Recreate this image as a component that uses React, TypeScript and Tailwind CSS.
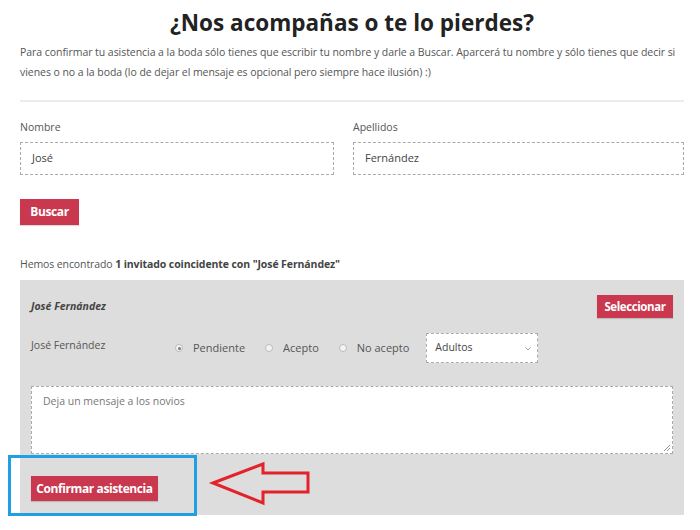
import React from 'react';

const font = { fontFamily: '"Open Sans", "Liberation Sans", sans-serif' };

function Radio({ checked, label }: { checked?: boolean; label: string }) {
  return (
    <label className="flex items-center gap-[10px] text-[11px] text-[#555]">
      <span className="w-[8px] h-[8px] rounded-full border border-[#bbb] bg-[#f4f4f4] flex items-center justify-center">
        {checked && <span className="w-[3px] h-[3px] rounded-full bg-[#777]" />}
      </span>
      <span>{label}</span>
    </label>
  );
}

export default function App() {
  return (
    <div className="relative w-[700px] h-[530px] bg-white overflow-hidden" style={font}>
      <div className="pl-5 pr-4 pt-2">
        {/* Title */}
        <h1 className="text-center text-[22.5px] leading-[30px] font-bold text-[#222]">
          ¿Nos acompañas o te lo pierdes?
        </h1>
        <p className="mt-1 text-[10.5px] leading-[20px] text-[#555] tracking-[-0.05px]">
          Para confirmar tu asistencia a la boda sólo tienes que escribir tu nombre y darle a Buscar. Aparcerá tu nombre y sólo tienes que decir si vienes o no a la boda (lo de dejar el mensaje es opcional pero siempre hace ilusión) :)
        </p>

        <div className="mt-[18px] h-[2px] bg-[#ececec]" />

        {/* Search form */}
        <div className="mt-[17px] grid grid-cols-[314px_1fr] gap-x-[19px]">
          <div>
            <div className="text-[10.5px] leading-[16px] text-[#555]">Nombre</div>
            <div className="mt-[7px] h-[33px] border border-dashed border-[#aaa] px-[11px] flex items-center text-[11px] text-[#444]">
              José
            </div>
          </div>
          <div>
            <div className="text-[10.5px] leading-[16px] text-[#555]">Apellidos</div>
            <div className="mt-[7px] h-[33px] border border-dashed border-[#aaa] px-[11px] flex items-center text-[11px] text-[#444]">
              Fernández
            </div>
          </div>
        </div>

        <button className="mt-6 h-[26px] w-[59px] bg-[#c9384f] text-white text-[12px] font-bold tracking-[-0.4px] flex items-center justify-center shadow-[0_1px_1px_rgba(0,0,0,0.15)]">
          Buscar
        </button>

        <p className="mt-[31px] text-[10.5px] leading-[16px] text-[#555] tracking-[-0.1px]">
          Hemos encontrado <strong className="font-bold text-[#444]">1 invitado coincidente con "José Fernández"</strong>
        </p>

        {/* Result panel */}
        <div className="mt-2 bg-[#dddddd] px-[11px] pt-[15px] pb-[14px]">
          <div className="flex items-center justify-between h-[23px]">
            <span className="text-[10.5px] font-bold italic text-[#444]">José Fernández</span>
            <button className="h-[23px] w-[76px] bg-[#c9384f] text-white text-[11.5px] font-bold tracking-[-0.4px] flex items-center justify-center shadow-[0_1px_1px_rgba(0,0,0,0.15)]">
              Seleccionar
            </button>
          </div>

          <div className="mt-[15px] flex items-center h-[30px]">
            <span className="w-[144px] text-[10.5px] text-[#555] -mt-[4px]">José Fernández</span>
            <div className="flex items-center gap-[20px]">
              <Radio checked label="Pendiente" />
              <Radio label="Acepto" />
              <Radio label="No acepto" />
            </div>
            <div className="ml-[17px] w-[112px] h-[30px] bg-white border border-dashed border-[#aaa] pl-[8px] pr-[6px] flex items-center justify-between text-[10.5px] text-[#444]">
              <span>Adultos</span>
              <svg width="6" height="4" viewBox="0 0 6 4" className="mt-[2px]">
                <path d="M0.5 0.5 L3 3 L5.5 0.5" fill="none" stroke="#999" strokeWidth="0.9" />
              </svg>
            </div>
          </div>

          <div className="relative mt-[23px] h-[68px] bg-white border border-dashed border-[#aaa] px-[11px] pt-[7px] text-[10.5px] text-[#777]">
            Deja un mensaje a los novios
            <svg width="8" height="8" viewBox="0 0 8 8" className="absolute right-[1px] bottom-[1px]">
              <path d="M7 1 L1 7 M7 4 L4 7" stroke="#888" strokeWidth="0.9" />
            </svg>
          </div>

          <button className="mt-[22px] h-[25px] w-[127px] bg-[#c9384f] text-white text-[12px] font-bold tracking-[-0.4px] flex items-center justify-center shadow-[0_1px_1px_rgba(0,0,0,0.15)]">
            Confirmar asistencia
          </button>
        </div>
      </div>

      {/* Annotations */}
      <div className="absolute left-[8px] top-[455px] w-[189px] h-[61px] border-[3px] border-[#1ea0e1]" />
      <svg className="absolute left-0 top-0" width="700" height="530" viewBox="0 0 700 530">
        <polygon
          points="213,483 263,464 263,473 308,473 308,492 263,492 263,503"
          fill="none"
          stroke="#e3232b"
          strokeWidth="3"
          strokeLinejoin="miter"
        />
      </svg>
    </div>
  );
}
